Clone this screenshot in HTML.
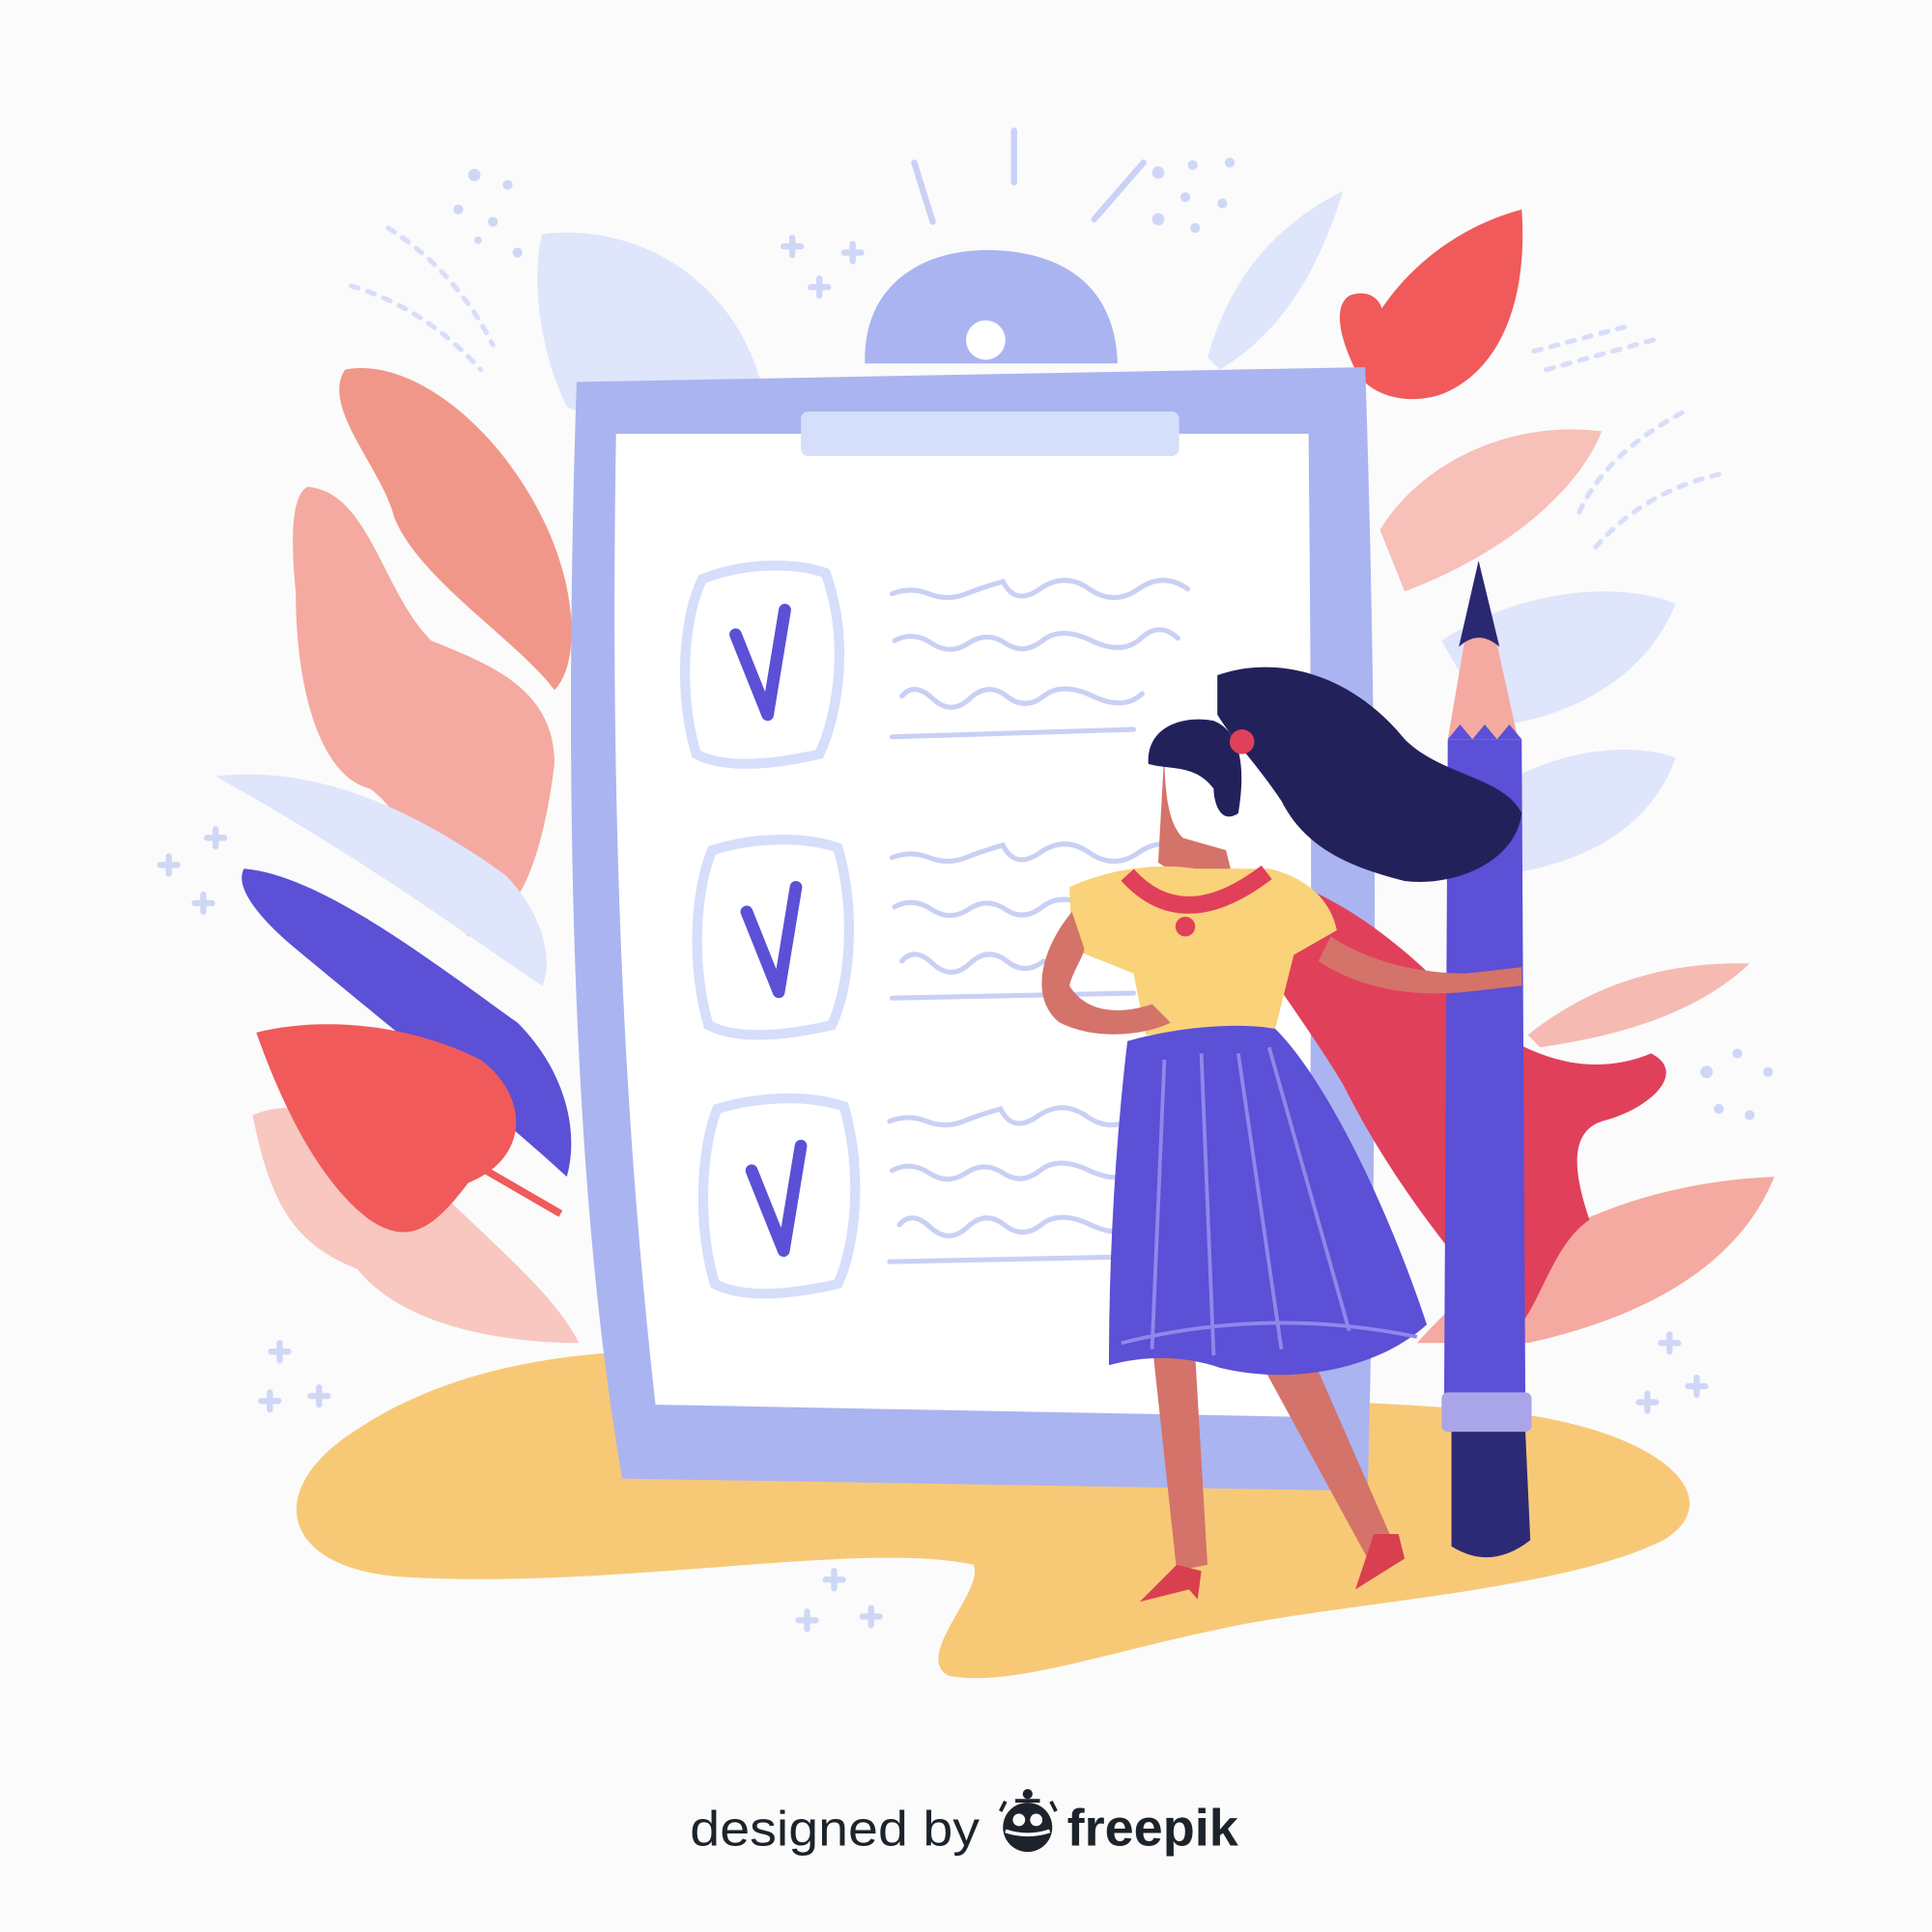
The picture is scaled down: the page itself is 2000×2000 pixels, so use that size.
<!DOCTYPE html>
<html><head><meta charset="utf-8"><style>
html,body{margin:0;padding:0;background:#fbfbfb;}
svg{display:block;}
</style></head><body>
<svg width="2000" height="2000" viewBox="0 0 1568 1568" xmlns="http://www.w3.org/2000/svg">
<rect width="1568" height="1568" fill="#fbfbfb"/>
<g stroke="#c9d2f6" stroke-width="5" stroke-linecap="round" fill="none">
<path d="M742 132 L757 180"/><path d="M823 106 L823 148"/><path d="M888 178 L928 132"/>
</g>
<g fill="#cfd7f7">
<circle cx="385" cy="142" r="5"/><circle cx="412" cy="150" r="4"/><circle cx="372" cy="170" r="4"/><circle cx="400" cy="180" r="4"/><circle cx="420" cy="205" r="4"/><circle cx="388" cy="195" r="3"/>
<circle cx="940" cy="140" r="5"/><circle cx="968" cy="134" r="4"/><circle cx="998" cy="132" r="4"/><circle cx="962" cy="160" r="4"/><circle cx="992" cy="165" r="4"/><circle cx="940" cy="178" r="5"/><circle cx="970" cy="185" r="4"/>
<circle cx="1385" cy="870" r="5"/><circle cx="1410" cy="855" r="4"/><circle cx="1435" cy="870" r="4"/><circle cx="1395" cy="900" r="4"/><circle cx="1420" cy="905" r="4"/>
</g>
<g stroke="#cfd7f7" stroke-width="5" stroke-linecap="round">
<path d="M636 200h14M643 193v14M685 205h14M692 198v14M658 233h14M665 226v14"/>
<path d="M130 702h14M137 695v14M168 680h14M175 673v14M158 733h14M165 726v14"/>
<path d="M220 1097h14M227 1090v14M212 1137h14M219 1130v14M252 1133h14M259 1126v14"/>
<path d="M648 1315h14M655 1308v14M670 1282h14M677 1275v14M700 1312h14M707 1305v14"/>
<path d="M1348 1090h14M1355 1083v14M1330 1138h14M1337 1131v14M1370 1125h14M1377 1118v14"/>
</g>
<g stroke="#d8defa" stroke-width="4" stroke-linecap="round" fill="none" stroke-dasharray="6 8">
<path d="M315 185 Q370 220 400 280"/><path d="M285 232 Q345 250 390 300"/>
<path d="M1365 335 Q1300 370 1280 420"/><path d="M1395 385 Q1330 400 1290 450"/>
<path d="M1245 285 L1320 265"/><path d="M1255 300 L1345 275"/>
</g>
<path d="M290 1160 C380 1100 520 1080 700 1110 C900 1140 1100 1130 1250 1150 C1360 1170 1400 1220 1350 1250 C1270 1290 1100 1300 1000 1320 C900 1340 820 1370 770 1360 C740 1345 800 1290 790 1270 C700 1250 500 1290 330 1280 C230 1275 210 1210 290 1160Z" fill="#f7c977"/>
<path d="M440 190 C520 180 600 230 620 320 C600 360 520 360 460 330 C440 290 430 230 440 190Z" fill="#dfe5fb"/>
<path d="M280 300 C330 290 400 340 440 420 C470 480 470 540 450 560 C420 520 340 470 320 420 C310 380 260 330 280 300Z" fill="#f1978a"/>
<path d="M250 395 C300 400 310 480 350 520 C400 540 450 560 450 620 C440 700 420 750 380 760 C350 720 330 660 300 640 C260 630 240 560 240 480 C235 430 238 400 250 395Z" fill="#f4aaa0"/>
<path d="M175 630 C260 620 340 660 410 710 C440 740 450 780 440 800 C380 760 300 700 175 630Z" fill="#dfe5fb"/>
<path d="M198 705 C260 710 350 780 420 830 C460 870 470 920 460 955 C400 900 300 820 240 770 C210 745 190 720 198 705Z" fill="#5b50d6"/>
<path d="M205 905 C240 890 300 900 350 960 C400 1010 450 1050 470 1090 C420 1090 330 1080 290 1030 C240 1010 220 980 205 905Z" fill="#f7c7c0"/>
<path d="M208 838 C260 825 330 830 390 860 C430 890 430 940 380 960 C350 1000 330 1010 300 990 C260 960 230 900 208 838Z" fill="#f05a5a"/>
<path d="M360 930 L455 985" stroke="#f05a5a" stroke-width="6"/>
<path d="M1100 300 C1110 250 1160 190 1235 170 C1240 240 1220 300 1170 320 C1140 330 1110 320 1100 300Z M1100 300 C1090 280 1080 250 1095 240 C1120 230 1140 260 1100 300Z" fill="#f05a5a"/>
<path d="M1120 430 C1150 380 1220 340 1300 350 C1280 400 1220 450 1140 480Z" fill="#f7c0b8"/>
<path d="M1170 520 C1230 480 1310 470 1360 490 C1340 540 1290 580 1210 590Z" fill="#dfe5fb"/>
<path d="M1200 650 C1250 610 1320 600 1360 615 C1340 670 1290 700 1220 710Z" fill="#dfe5fb"/>
<path d="M980 290 C1000 220 1040 180 1090 155 C1070 220 1040 270 990 300Z" fill="#dfe5fb"/>
<path d="M1150 1090 C1230 1000 1330 960 1440 955 C1410 1030 1330 1070 1240 1090Z" fill="#f4aaa0"/>
<path d="M1240 840 C1290 800 1350 780 1420 782 C1380 820 1320 840 1250 850Z" fill="#f4aaa0" opacity=".8"/>
<path d="M468 310 L1108 298 C1118 600 1118 900 1110 1210 L505 1200 C470 1000 455 700 468 310Z" fill="#aab4f0"/>
<path d="M702 295 C700 230 750 203 800 203 C860 203 905 230 907 295Z" fill="#aab4f0"/>
<circle cx="800" cy="276" r="16" fill="#fff"/>
<path d="M500 352 L1062 352 C1065 650 1065 900 1060 1150 L532 1140 C505 900 495 650 500 352Z" fill="#fff"/>
<rect x="650" y="334" width="307" height="36" rx="6" fill="#d5defa"/>
<g fill="none" stroke="#d5defa" stroke-width="8">
<path d="M570 470 C600 458 640 455 670 465 C690 520 680 580 665 612 C630 620 590 625 565 612 C550 560 555 500 570 470Z"/>
<path d="M578 690 C610 680 650 678 680 688 C695 740 690 800 675 832 C640 840 600 845 575 832 C560 780 565 720 578 690Z"/>
<path d="M582 900 C615 890 655 888 685 898 C700 950 695 1010 680 1042 C645 1050 605 1055 580 1042 C565 990 570 930 582 900Z"/>
</g>
<g fill="none" stroke="#5b50d6" stroke-width="10" stroke-linecap="round" stroke-linejoin="round">
<path d="M597 515 L623 580 L637 495"/>
<path d="M606 740 L632 805 L646 720"/>
<path d="M610 950 L636 1015 L650 930"/>
</g>
<g fill="none" stroke="#c9d0f5" stroke-width="4" stroke-linecap="round">
<path d="M724 482 q15 -6 30 0 t30 0 t30 -10 q10 20 30 6 t40 0 t40 0 t40 0"/>
<path d="M726 520 q15 -8 30 2 t30 0 t30 0 t30 -2 t40 0 t40 -2 t30 0"/>
<path d="M732 565 q10 -12 25 2 t30 0 t30 -2 t30 0 t40 0 t40 -2"/>
<path d="M724 598 L920 592"/>
<path d="M724 696 q15 -6 30 0 t30 0 t30 -10 q10 20 30 6 t40 0 t40 0 t40 0"/>
<path d="M726 736 q15 -8 30 2 t30 0 t30 0 t30 -2 t40 0"/>
<path d="M732 780 q10 -12 25 2 t30 0 t30 -2 t30 0"/>
<path d="M724 810 L920 806"/>
<path d="M722 910 q15 -6 30 0 t30 0 t30 -10 q10 20 30 6 t40 0 t40 0 t40 0"/>
<path d="M724 950 q15 -8 30 2 t30 0 t30 0 t30 -2 t40 0 t40 -2 t30 0"/>
<path d="M730 994 q10 -12 25 2 t30 0 t30 -2 t30 0 t40 0 t40 -2"/>
<path d="M722 1024 L915 1020"/>
</g>
<path d="M1000 705 C1060 710 1120 750 1170 800 C1220 850 1280 880 1340 855 C1370 870 1340 900 1300 910 C1270 920 1280 960 1290 990 C1260 1010 1250 1060 1230 1080 C1180 1020 1130 960 1090 880 C1060 830 1020 780 1000 740Z" fill="#e0405a"/>
<path d="M1175 600 L1235 600 L1238 1140 L1172 1140Z" fill="#5b50d6"/>
<path d="M1175 600 L1200 455 L1232 600Z" fill="#f4aaa0"/>
<path d="M1184 525 L1200 455 L1217 525 Q1200 510 1184 525Z" fill="#2a2870"/>
<path d="M1175 600 l10 -12 l10 12 l10 -12 l10 12 l10 -12 l10 12Z" fill="#5b50d6"/>
<rect x="1170" y="1130" width="73" height="32" rx="5" fill="#a9a5e8"/>
<path d="M1178 1162 L1238 1162 L1242 1250 Q1210 1275 1178 1255Z" fill="#2d2a75"/>
<path d="M988 548 C1040 530 1100 550 1140 600 C1170 630 1220 630 1235 660 C1230 700 1180 720 1140 715 C1100 705 1060 690 1040 650 C1020 620 1000 600 988 580Z" fill="#23215a"/>
<path d="M945 610 C945 650 950 670 960 680 L995 690 L1000 710 L970 720 L940 700 L945 610Z" fill="#d4736a"/>
<path d="M932 620 C930 590 960 580 985 585 C1010 595 1010 630 1005 660 C990 670 985 650 985 640 C970 620 950 625 932 620Z" fill="#23215a"/>
<circle cx="1008" cy="602" r="10" fill="#e0405a"/>
<path d="M868 720 C900 705 940 700 970 705 L1030 705 C1060 712 1080 730 1085 755 L1050 775 L1035 835 L930 840 L920 790 L870 770Z" fill="#f9d27a"/>
<path d="M915 710 Q960 760 1028 708" fill="none" stroke="#e0405a" stroke-width="14"/>
<circle cx="962" cy="752" r="8" fill="#e0405a"/>
<path d="M870 740 C845 770 835 810 860 830 C890 845 930 840 950 830 L935 815 C905 825 880 820 868 800 C870 790 880 775 880 770Z" fill="#d4736a"/>
<path d="M1080 760 C1110 780 1150 790 1190 790 L1235 785 L1235 800 L1190 805 C1140 810 1100 800 1070 780Z" fill="#d4736a"/>
<path d="M935 1090 L970 1100 L980 1270 L955 1275Z" fill="#d4736a"/>
<path d="M1020 1100 L1060 1090 L1130 1250 L1110 1265Z" fill="#d4736a"/>
<path d="M925 1300 L955 1270 L975 1275 L972 1298 L965 1290Z" fill="#d9404f"/>
<path d="M1100 1290 L1115 1245 L1135 1245 L1140 1265Z" fill="#d9404f"/>
<path d="M915 845 C960 832 1010 830 1035 835 C1080 880 1130 990 1158 1075 C1120 1110 1050 1125 990 1110 C960 1100 930 1100 900 1108 C900 1020 905 930 915 845Z" fill="#5b50d6"/>
<g fill="none" stroke="#8f88ea" stroke-width="3">
<path d="M945 860 L935 1095"/><path d="M975 855 L985 1100"/><path d="M1005 855 L1040 1095"/><path d="M1030 850 L1095 1080"/>
<path d="M910 1090 Q1030 1060 1150 1085"/>
</g>
<text x="560" y="1498" font-family="Liberation Sans, sans-serif" font-size="40" fill="#1c232b" textLength="235" lengthAdjust="spacingAndGlyphs">designed by</text>
<g fill="#1c232b" transform="translate(2,0)">
<circle cx="832" cy="1483" r="20"/>
<circle cx="832" cy="1456" r="4"/>
<rect x="822" y="1460" width="20" height="3"/>
<path d="M810 1470 l4 -8 M855 1470 l-4 -8" stroke="#1c232b" stroke-width="3"/>
<circle cx="825" cy="1477" r="5" fill="#fbfbfb"/><circle cx="839" cy="1477" r="5" fill="#fbfbfb"/>
<path d="M814 1486 Q832 1492 850 1486" stroke="#fbfbfb" stroke-width="3" fill="none"/>
</g>
<text x="866" y="1498" font-family="Liberation Sans, sans-serif" font-weight="bold" font-size="42" fill="#1c232b" textLength="139" lengthAdjust="spacingAndGlyphs">freepik</text>
</svg>
</body></html>
